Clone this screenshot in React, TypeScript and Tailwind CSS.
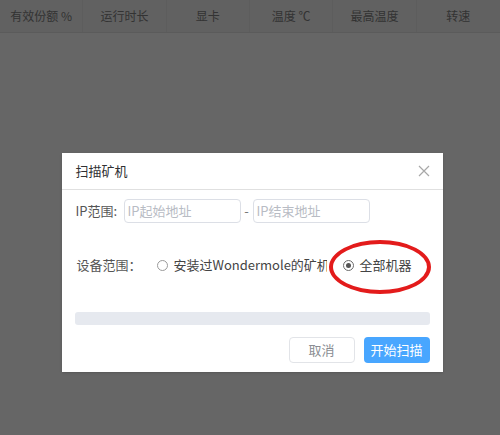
import React from 'react'

const columns = ['有效份额 %', '运行时长', '显卡', '温度 ℃', '最高温度', '转速']

const Radio = ({ checked, label }: { checked?: boolean; label: string }) => (
  <label className="flex h-[18px] items-center gap-[6px] whitespace-nowrap">
    <span
      className={
        'flex h-[11px] w-[11px] shrink-0 items-center justify-center rounded-full border ' +
        (checked ? 'border-[#6b6b6b]' : 'border-[#9a9a9a]')
      }
    >
      {checked && <span className="h-[5px] w-[5px] rounded-full bg-[#555]" />}
    </span>
    <span>{label}</span>
  </label>
)

const App: React.FC = () => {
  return (
    <div
      className="relative h-[435px] w-[500px] overflow-hidden bg-white text-[#606266]"
      style={{ fontFamily: '"Noto Sans CJK SC", "Noto Sans", sans-serif' }}
    >
      <div className="grid h-[33px] grid-cols-6 border-b border-[#e4e4e4] bg-[#f2f2f2] text-[12px] text-[#808080]">
        {columns.map((c, i) => (
          <div
            key={c}
            className={'flex items-center justify-center ' + (i < 5 ? 'border-r border-[#e8e8e8]' : '')}
          >
            {c}
          </div>
        ))}
      </div>

      <div className="absolute inset-0 flex items-start justify-center bg-black/60 pl-[4px] pt-[153px]">
        <div className="w-[381px] bg-white shadow-sm">
          <div className="flex h-[37px] items-center justify-between border-b border-[#e0e0e0] pl-[14px] pr-[13px] text-[13px] text-[#303133]">
            <span>扫描矿机</span>
            <svg width="12" height="12" viewBox="0 0 12 12" className="text-[#a8a8a8]">
              <path d="M1 1L11 11M11 1L1 11" stroke="currentColor" strokeWidth="1.2" />
            </svg>
          </div>

          <div className="px-[13px] pt-[9px] pb-[9px] text-[13px]">
            <div className="flex items-center">
              <span className="w-[49px] pl-[1px] text-[#555]">IP范围:</span>
              <div className="flex h-[24px] w-[117px] items-center rounded-[4px] border border-[#dcdfe6] px-[3px] text-[#b8bcc4]">
                IP起始地址
              </div>
              <span className="w-[12px] text-center text-[#777]">-</span>
              <div className="flex h-[24px] w-[117px] items-center rounded-[4px] border border-[#dcdfe6] px-[3px] text-[#b8bcc4]">
                IP结束地址
              </div>
            </div>

            <div className="mt-[29px] flex h-[26px] items-center text-[#444]">
              <span className="w-[82px] shrink-0 pl-[2px] text-[#555]">设备范围：</span>
              <div className="flex items-center gap-[16px]">
                <div className="w-[170px] overflow-hidden">
                  <Radio label="安装过Wondermole的矿机" />
                </div>
                <div className="relative">
                  <Radio checked label="全部机器" />
                  <div className="pointer-events-none absolute left-[-14px] top-[-16px] h-[54px] w-[102px] rounded-[50%] border-[4px] border-[#e31b1b]" />
                </div>
              </div>
            </div>

            <div className="mt-[34px] h-[13px] rounded-[3px] bg-[#e6e9ef]" />

            <div className="mt-[12px] flex justify-end gap-[9px]">
              <button className="h-[26px] w-[66px] rounded-[4px] border border-[#e2e4e8] bg-white text-[13px] text-[#8a8d92]">
                取消
              </button>
              <button className="h-[26px] w-[66px] rounded-[4px] bg-[#48a6ff] text-[13px] text-white">
                开始扫描
              </button>
            </div>
          </div>
        </div>
      </div>
    </div>
  )
}

export default App
